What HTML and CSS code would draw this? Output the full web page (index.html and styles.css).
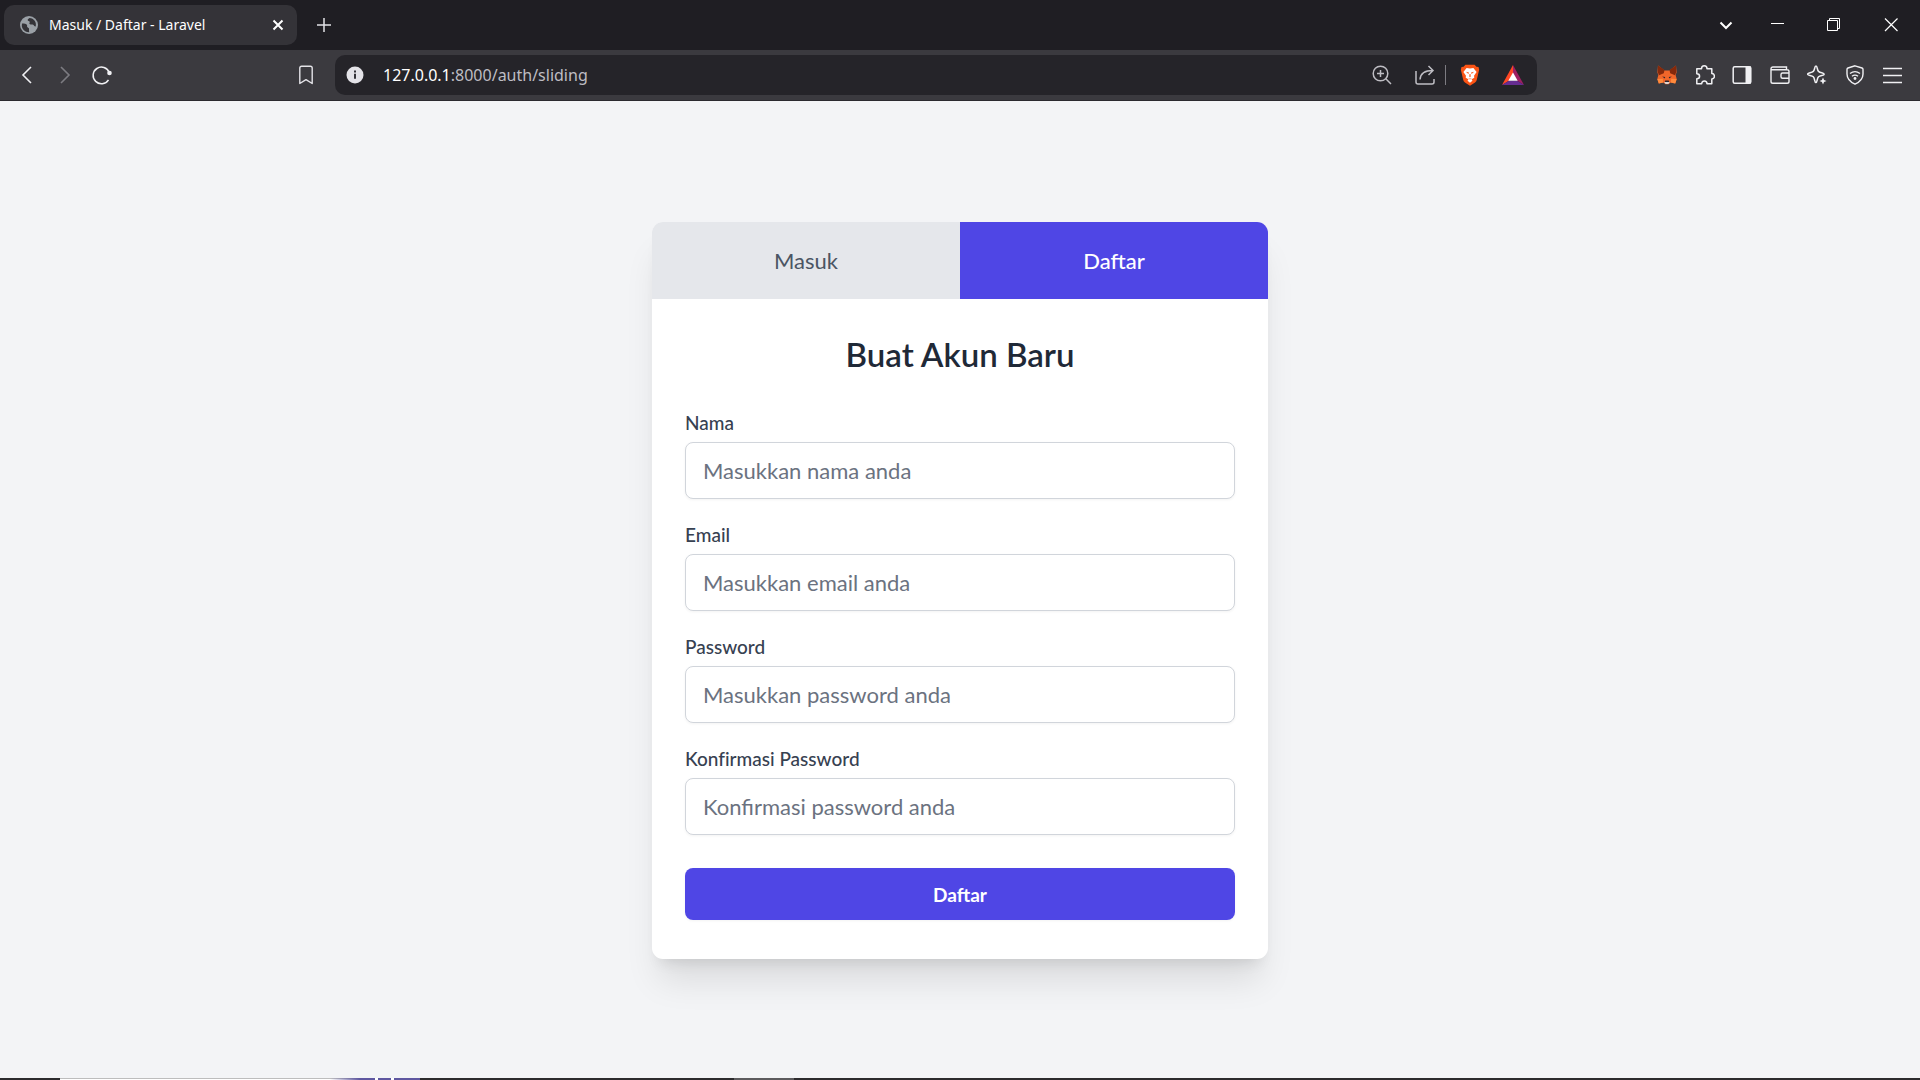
FILE: index.html
```html
<!DOCTYPE html>
<html lang="id">
<head>
<meta charset="utf-8">
<meta name="viewport" content="width=device-width, initial-scale=1">
<title>Masuk / Daftar - Laravel</title>
<link rel="stylesheet" href="styles.css">
</head>
<body>
<header class="browser">
  <div class="tab-strip">
    <div class="tab">
      <svg class="icon-18" viewBox="0 0 18 18"><circle cx="9" cy="9" r="9" fill="#9aa0a6"/><path d="M2 7.500c2.300 0 4.500 .3 5 1.500s-.6 1.600 .8 2.400c1.200 .6 1.400 .9 1.200 2.200-.1 1.300 .2 1.900 .2 2.600-4 .2-7.200-3-7.400-6.500zM9.500 2c-.8 .9-2 1-1.800 2.200.2 1.100 1.600 .5 2 1.600.3 1.200-.8 1.500-.1 2.300.8 .9 2.200-.2 3.600 .6 1.100 .7 1 1.900 2.500 1.800C16.800 6 14 2.400 9.500 2z" fill="#343338"/></svg>
      <span class="tab-title">Masuk / Daftar - Laravel</span>
      <button class="icon-button" aria-label="Close tab"><svg class="icon-18" viewBox="0 0 18 18"><path d="M4.500 4.500l9 9M13.500 4.500l-9 9" stroke="#fff" stroke-width="2"/></svg></button>
    </div>
    <button class="icon-button" aria-label="New tab"><svg class="icon-18" viewBox="0 0 18 18"><path d="M9 2v14M2 9h14" stroke="#e4e3e8" stroke-width="1.500"/></svg></button>
    <button class="icon-button tab-search" aria-label="Search tabs"><svg class="icon-20" viewBox="0 0 20 20"><path d="M4.500 7.500l5.500 5.500 5.500-5.500" fill="none" stroke="#fff" stroke-width="2"/></svg></button>
    <div class="window-controls">
      <button class="icon-button" aria-label="Minimize"><svg class="icon-20" viewBox="0 0 20 20"><path d="M4 8.500h13" stroke="#fff"/></svg></button>
      <button class="icon-button" aria-label="Restore"><svg class="icon-20" viewBox="0 0 20 20"><path d="M3.500 5.500h10v10h-10zM5.500 5.500v-2h10v10h-2" fill="none" stroke="#fff"/></svg></button>
      <button class="icon-button" aria-label="Close"><svg class="icon-20" viewBox="0 0 20 20"><path d="M4 3.500l12.500 12.500M16.500 3.500L4 16" stroke="#fff" stroke-width="1.200"/></svg></button>
    </div>
  </div>
  <div class="toolbar">
    <div class="nav-buttons">
      <button class="icon-button" aria-label="Back"><svg class="icon-20" viewBox="0 0 20 20"><path d="M13 2L5 10l8 8" fill="none" stroke="#f0f0f3" stroke-width="1.600"/></svg></button>
      <button class="icon-button" aria-label="Forward"><svg class="icon-20" viewBox="0 0 20 20"><path d="M6 2l8 8-8 8" fill="none" stroke="#7d7c82" stroke-width="1.600"/></svg></button>
      <button class="icon-button" aria-label="Reload"><svg class="icon-20" viewBox="0 0 20 20"><path d="M17.200 7.500A8.300 8.300 0 1 0 16.500 14.800" fill="none" stroke="#f0f0f3" stroke-width="1.500"/><circle cx="17.500" cy="8" r="2.300" fill="#f0f0f3"/></svg></button>
    </div>
    <button class="icon-button bookmark" aria-label="Bookmark"><svg class="icon-20" viewBox="0 0 20 20"><path d="M3.800 18.500V3q0-1.800 1.800-1.800h8.800q1.800 0 1.800 1.800v15.500L10 14.600z" fill="none" stroke="#e4e3e8" stroke-width="1.400" stroke-linejoin="round"/></svg></button>
    <div class="address">
      <svg class="icon-18" viewBox="0 0 18 18"><circle cx="9" cy="9" r="8.500" fill="#e4e3e8"/><path d="M9 7.800v5M9 4.600v2" stroke="#343338" stroke-width="2"/></svg>
      <span class="url">127.0.0.1<span class="url-path">:8000/auth/sliding</span></span>
      <button class="icon-button" aria-label="Zoom"><svg class="icon-20" viewBox="0 0 20 20"><g fill="none" stroke="#bebdc3" stroke-width="1.500"><circle cx="8.500" cy="8.500" r="7.300"/><path d="M8.500 5v7M5 8.500h7M13.800 13.800L19 19"/></g></svg></button>
      <button class="icon-button share" aria-label="Share"><svg class="icon-20" viewBox="0 0 20 20"><g fill="none" stroke="#bebdc3" stroke-width="1.500"><path d="M1 6v11q0 2 2 2h14q2 0 2-2v-3M5 14.500Q5.500 5.500 18 5.500M13.500 1L18 5.500 13.500 10"/></g></svg></button>
      <span class="divider"></span>
      <button class="icon-button brave" aria-label="Brave Shields"><svg class="icon-22" viewBox="0 0 22 24"><path d="M6 .8h10l2 2.200 2.300 .2.700 3-.6 2.500-1.900 8.300q-.4 2-2 3.200L11 23.800l-5.500-3.600q-1.600-1.200-2-3.200L1.600 8.700 1 6.200l.7-3L4 3z" fill="#fb5415"/><path d="M7.300 4.300L11 5l3.700-.7 3.500 4.500-2.800 4 .3 2.200-3 1.500 1 1.700L11 20.500l-2.700-2.300 1-1.700-3-1.500.3-2.200-2.800-4z" fill="#fff"/><path d="M6.500 8.500l3.300 .8-.5 1.500zM15.500 8.500l-3.300 .8.5 1.500zM10.500 11h1l.3 2.500-.8 1-.8-1zM8.800 15.300l2.200 .7 2.200-.7-2.200 1.700z" fill="#fb5415"/></svg></button>
      <button class="icon-button" aria-label="Brave Rewards"><svg class="icon-22" viewBox="0 0 22 20"><path d="M11 0L0 20l7.300-4.500L11 8.500z" fill="#ff4724"/><path d="M11 0l11 20-7.300-4.500L11 8.500z" fill="#9e1f63"/><path d="M0 20h22l-7.300-4.500H7.300z" fill="#662d91"/><path d="M11 7.500l4.700 8.200H6.300z" fill="#fff"/></svg></button>
    </div>
    <div class="extensions">
      <button class="icon-button" aria-label="MetaMask"><svg class="icon-20" viewBox="0 0 20 20"><path d="M1 .5L7.500 5.500h5L19 .5l.6 7-1 2.500 1.100 4-1.500 4.500-4.400-1-2.300 1.800h-3L6.200 17.500l-4.400 1L.3 14l1.100-4-1-2.500z" fill="#f0662a"/><path d="M1 .5L7.500 5 6.800 8.200 2 10.200 .8 7.500zM19 .5L12.500 5l.7 3.200 4.800 2L19.200 7.500z" fill="#85290b"/><path d="M.3 14l5.500-.3 .4 3.800-4.400 1zM19.700 14l-5.500-.3-.4 3.800 4.400 1z" fill="#ff8a3c"/><path d="M5.200 11.500l3 .6-.4 1.400zM14.800 11.500l-3 .6.4 1.400zM8.200 15.500h3.600l.4 1.500H7.800z" fill="#2b2530"/><path d="M7.200 17h5.600l-1.400 2H8.600z" fill="#ddd5d1"/></svg></button>
      <button class="icon-button" aria-label="Extensions"><svg class="icon-20" viewBox="0 0 20 20"><path d="M1.800 3.800h4.700c0-4 5.500-4 5.500 0h4.800v4.700c3.500 .2 3.500 5.300 0 5.500v4.700H12c0-3.700-5.300-3.700-5.300 0H1.800v-4.900c3.700-.2 3.700-5 0-5z" fill="none" stroke="#f0f0f3" stroke-width="1.500" stroke-linejoin="round"/></svg></button>
      <button class="icon-button" aria-label="Sidebar"><svg class="icon-20" viewBox="0 0 20 20"><rect x="1.200" y="1.700" width="17.600" height="16.600" rx="1.500" fill="none" stroke="#f0f0f3" stroke-width="1.500"/><path d="M13.500 1.500H19v17h-5.500z" fill="#f0f0f3"/></svg></button>
      <button class="icon-button" aria-label="Wallet"><svg class="icon-20" viewBox="0 0 20 20"><g fill="none" stroke="#f0f0f3" stroke-width="1.400"><path d="M16.500 4.500V2H3Q1 2 1 4v12.500q0 1.800 1.800 1.800h14.400q1.800 0 1.800-1.800v-10q0-1.800-1.800-1.800H1.500M19 8h-6.500Q11 8 11 9.500v2.200q0 1.500 1.500 1.500H19"/></g></svg></button>
      <button class="icon-button" aria-label="Leo AI"><svg class="icon-20" viewBox="0 0 20 20"><path d="M9 1c.6 0 .9.500 1.300 2.500.6 2.800 1.200 3.500 4.500 4.300 3.200.8 3.200 2 0 2.600-3.300.8-3.900 1.500-4.600 4.600-.6 3.200-2 3.200-2.600 0-.7-3.100-1.300-3.800-4.600-4.600-3.200-.6-3.200-1.800 0-2.600 3.300-.8 4-1.500 4.600-4.300C8 1.500 8.400 1 9 1z" fill="none" stroke="#f0f0f3" stroke-width="1.500"/><path d="M16 12.500l1.100 2.400 2.400 1.100-2.400 1.100L16 19.500l-1.100-2.400-2.400-1.100 2.400-1.100z" fill="#f0f0f3"/></svg></button>
      <button class="icon-button" aria-label="VPN"><svg class="icon-20" viewBox="0 0 20 20"><g fill="none" stroke="#f0f0f3" stroke-width="1.400"><path d="M10 .8l7 2.200q1 .4 1 1.500V9q0 6.500-8 10.200Q2 15.500 2 9V4.500Q2 3.400 3 3z"/><path d="M5 8.500q5-3.800 10 0M7 11.300q3-2.300 6 0"/></g><circle cx="10" cy="13.500" r="1.400" fill="#f0f0f3"/></svg></button>
      <button class="icon-button" aria-label="Menu"><svg class="icon-20" viewBox="0 0 20 20"><path d="M1 3.500h19M1 10.500h19M1 17.500h19" stroke="#f0f0f3" stroke-width="1.400"/></svg></button>
    </div>
  </div>
</header>

<main class="page">
  <section class="card">
    <div class="auth-tabs">
      <button class="auth-tab" type="button">Masuk</button>
      <button class="auth-tab auth-tab-active" type="button">Daftar</button>
    </div>
    <form class="form">
      <h1 class="heading">Buat Akun Baru</h1>
      <div class="field">
        <label for="name">Nama</label>
        <input id="name" type="text" placeholder="Masukkan nama anda">
      </div>
      <div class="field">
        <label for="email">Email</label>
        <input id="email" type="email" placeholder="Masukkan email anda">
      </div>
      <div class="field">
        <label for="password">Password</label>
        <input id="password" type="password" placeholder="Masukkan password anda">
      </div>
      <div class="field">
        <label for="confirm">Konfirmasi Password</label>
        <input id="confirm" type="password" placeholder="Konfirmasi password anda">
      </div>
      <button class="submit" type="submit">Daftar</button>
    </form>
  </section>
</main>

<footer class="taskbar">
  <span class="taskbar-start"></span>
  <span class="taskbar-search"></span>
  <span class="taskbar-gap"></span>
  <span class="taskbar-app"></span>
</footer>
</body>
</html>
```
FILE: styles.css
```css
* {
  box-sizing: border-box;
}

body {
  margin: 0;
  min-height: 100vh;
  display: flex;
  flex-direction: column;
  background: #f3f4f6;
  font-family: Lato, "Open Sans", sans-serif;
  font-variant-ligatures: none;
}

button {
  border: 0;
  padding: 0;
  background: none;
  font-family: inherit;
  cursor: pointer;
}

/* Browser chrome */

.browser {
  font-family: "Noto Sans", "Open Sans", sans-serif;
  color: #fff;
}

.icon-button {
  display: flex;
  flex: none;
}

.icon-18,
.icon-20,
.icon-22 {
  display: block;
  flex: none;
}

.icon-18 {
  width: 18px;
  height: 18px;
}

.icon-20 {
  width: 20px;
  height: 20px;
}

.icon-22 {
  width: 22px;
  height: 22px;
}

.tab-strip {
  display: flex;
  align-items: center;
  gap: 18px;
  height: 50px;
  padding: 0 19px 0 4px;
  background: #1f1e23;
}

.tab {
  display: flex;
  align-items: center;
  gap: 11px;
  width: 293px;
  height: 40px;
  padding: 0 10px 0 16px;
  border-radius: 10px;
  background: #343338;
}

.tab-title {
  flex: 1;
  font-size: 14px;
  line-height: 20px;
  white-space: nowrap;
}

.tab-search {
  margin-left: auto;
}

.window-controls {
  display: flex;
  gap: 37px;
  margin-left: 13px;
}

.toolbar {
  display: flex;
  align-items: center;
  height: 51px;
  padding: 0 18px;
  border-bottom: 1px solid #2b2a2f;
  background: #3b3a3f;
}

.nav-buttons {
  display: flex;
  gap: 17px;
}

.bookmark {
  margin-left: 184px;
  margin-right: 19px;
}

.address {
  display: flex;
  flex: 0 1 1202px;
  align-items: center;
  height: 40px;
  padding: 0 13px 0 11px;
  border-radius: 10px;
  background: #252429;
}

.url {
  flex: 1;
  margin-left: 19px;
  font-size: 16px;
  line-height: 24px;
}

.url-path {
  color: #bebdc3;
}

.share {
  margin-left: 23px;
}

.divider {
  width: 1px;
  height: 20px;
  margin: 0 13px 0 10px;
  background: #7d7c82;
}

.brave {
  margin-right: 21px;
}

.extensions {
  display: flex;
  justify-content: space-between;
  width: 245px;
  margin-left: auto;
}

/* Registration page */

.page {
  display: flex;
  flex: 1;
  align-items: center;
  justify-content: center;
  padding: 26px 24px 24px;
}

.card {
  width: 100%;
  max-width: 616px;
  overflow: hidden;
  border-radius: 11px;
  background: #fff;
  box-shadow: 0 28px 34px -7px rgb(0 0 0 / 10%), 0 11px 14px -8px rgb(0 0 0 / 10%);
}

.auth-tabs {
  display: grid;
  grid-template-columns: 1fr 1fr;
}

.auth-tab {
  padding: 22px;
  background: #e5e7eb;
  color: #4b5563;
  font-size: 22px;
  line-height: 33px;
}

.auth-tab-active {
  background: #4f46e5;
  color: #fff;
  font-weight: 500;
}

.form {
  padding: 33px 33px 39px;
}

.heading {
  margin: 0 0 33px;
  color: #1f2937;
  font-size: 33px;
  font-weight: 600;
  line-height: 44px;
  text-align: center;
}

.field {
  margin-bottom: 22px;
}

.field label {
  display: block;
  margin-bottom: 6px;
  color: #374151;
  font-size: 19px;
  font-weight: 500;
  line-height: 27px;
}

.field input {
  display: block;
  width: 100%;
  height: 57px;
  padding: 0 17px;
  border: 1px solid #d1d5db;
  border-radius: 8px;
  background: #fff;
  box-shadow: 0 1px 3px rgb(0 0 0 / 5%);
  color: #111827;
  font-family: inherit;
  font-size: 22px;
}

.field input::placeholder {
  color: #6b7280;
  opacity: 1;
}

.submit {
  width: 100%;
  height: 52px;
  margin-top: 11px;
  border-radius: 8px;
  background: #4f46e5;
  box-shadow: 0 1px 3px rgb(0 0 0 / 5%);
  color: #fff;
  font-size: 19px;
  font-weight: 700;
}

/* Sliver of the desktop taskbar */

.taskbar {
  display: flex;
  height: 2px;
  background: #2c2b2d;
}

.taskbar-start {
  width: 60px;
}

.taskbar-search {
  width: 360px;
  background:
    linear-gradient(90deg, transparent 270px, #5e57a0 300px 315px, #fff 315px 318px, #5e57a0 318px 331px, #fff 331px 334px, #5e57a0 334px),
    linear-gradient(#bdbdbd 1px, #fff 1px);
}

.taskbar-gap {
  width: 314px;
}

.taskbar-app {
  width: 60px;
  background: #5c5b5d;
}
```
